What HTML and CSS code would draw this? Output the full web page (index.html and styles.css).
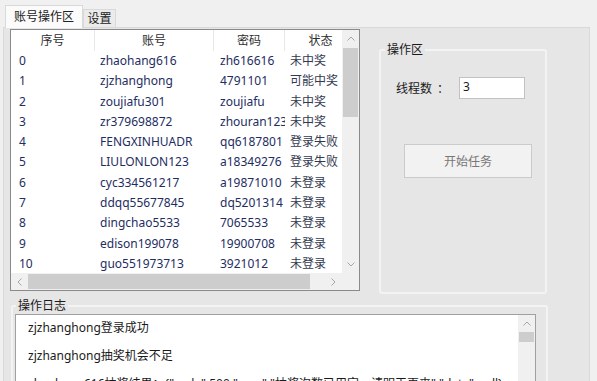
FILE: index.html
```html
<!DOCTYPE html>
<html lang="zh-CN">
<head>
<meta charset="utf-8">
<title>账号操作区</title>
<link rel="stylesheet" href="styles.css">
</head>
<body>
<div class="tabstrip">
  <div class="tab active">账号操作区</div>
  <div class="tab">设置</div>
</div>
<div class="tabpage">
  <div class="toprow">
    <div class="listview">
      <div class="lv-view">
        <div class="lv-header">
          <div class="hc c1">序号</div>
          <div class="hc c2">账号</div>
          <div class="hc c3">密码</div>
          <div class="hc c4">状态</div>
        </div>
        <div class="lv-row"><div class="cell c1">0</div><div class="cell c2">zhaohang616</div><div class="cell c3">zh616616</div><div class="cell c4">未中奖</div></div>
        <div class="lv-row"><div class="cell c1">1</div><div class="cell c2">zjzhanghong</div><div class="cell c3">4791101</div><div class="cell c4">可能中奖</div></div>
        <div class="lv-row"><div class="cell c1">2</div><div class="cell c2">zoujiafu301</div><div class="cell c3">zoujiafu</div><div class="cell c4">未中奖</div></div>
        <div class="lv-row"><div class="cell c1">3</div><div class="cell c2">zr379698872</div><div class="cell c3">zhouran123</div><div class="cell c4">未中奖</div></div>
        <div class="lv-row"><div class="cell c1">4</div><div class="cell c2">FENGXINHUADR</div><div class="cell c3">qq6187801</div><div class="cell c4">登录失败</div></div>
        <div class="lv-row"><div class="cell c1">5</div><div class="cell c2">LIULONLON123</div><div class="cell c3">a18349276</div><div class="cell c4">登录失败</div></div>
        <div class="lv-row"><div class="cell c1">6</div><div class="cell c2">cyc334561217</div><div class="cell c3">a19871010</div><div class="cell c4">未登录</div></div>
        <div class="lv-row"><div class="cell c1">7</div><div class="cell c2">ddqq55677845</div><div class="cell c3">dq5201314</div><div class="cell c4">未登录</div></div>
        <div class="lv-row"><div class="cell c1">8</div><div class="cell c2">dingchao5533</div><div class="cell c3">7065533</div><div class="cell c4">未登录</div></div>
        <div class="lv-row"><div class="cell c1">9</div><div class="cell c2">edison199078</div><div class="cell c3">19900708</div><div class="cell c4">未登录</div></div>
        <div class="lv-row"><div class="cell c1">10</div><div class="cell c2">guo551973713</div><div class="cell c3">3921012</div><div class="cell c4">未登录</div></div>
      </div>
      <div class="vscroll">
        <div class="sbtn"><svg width="8" height="5" viewBox="0 0 8 5"><polyline points="0.5,4.5 4,1 7.5,4.5" fill="none" stroke="#a6a6a6" stroke-width="1"/></svg></div>
        <div class="vtrack"><div class="vthumb"></div></div>
        <div class="sbtn"><svg width="8" height="5" viewBox="0 0 8 5"><polyline points="0.5,0.5 4,4 7.5,0.5" fill="none" stroke="#a6a6a6" stroke-width="1"/></svg></div>
      </div>
      <div class="hscroll">
        <div class="sbtn"><svg width="5" height="8" viewBox="0 0 5 8"><polyline points="4.5,0.5 1,4 4.5,7.5" fill="none" stroke="#a6a6a6" stroke-width="1"/></svg></div>
        <div class="htrack"><div class="hthumb"></div></div>
        <div class="sbtn"><svg width="5" height="8" viewBox="0 0 5 8"><polyline points="0.5,0.5 4,4 0.5,7.5" fill="none" stroke="#a6a6a6" stroke-width="1"/></svg></div>
      </div>
      <div class="corner"></div>
    </div>
    <fieldset class="group opgroup">
      <legend>操作区</legend>
      <div class="field">
        <span class="label">线程数<span class="colon">：</span></span>
        <div class="input">3</div>
      </div>
      <div class="btn">开始任务</div>
    </fieldset>
  </div>
  <fieldset class="group loggroup">
    <legend>操作日志</legend>
    <div class="logbox">
      <div class="logtext">
        <div class="line">zjzhanghong登录成功</div>
        <div class="line">zjzhanghong抽奖机会不足</div>
        <div class="line">zhaohang616抽奖结果：{"code":500,"msg":"抽奖次数已用完，请明天再来","data":null}</div>
      </div>
      <div class="logscroll">
        <div class="sbtn"><svg width="8" height="5" viewBox="0 0 8 5"><polyline points="0.5,4.5 4,1 7.5,4.5" fill="none" stroke="#a6a6a6" stroke-width="1"/></svg></div>
        <div class="logthumb"></div>
      </div>
    </div>
  </fieldset>
</div>
</body>
</html>
```

FILE: styles.css
```css
html, body {
  margin: 0;
  padding: 0;
}

body {
  width: 597px;
  height: 381px;
  overflow: hidden;
  background: #f0f0f0;
  font-family: "Noto Sans", "Noto Sans CJK SC", sans-serif;
  font-size: 12px;
  color: #1a1a1a;
}

/* ---------- tabs ---------- */
.tabstrip {
  display: flex;
  align-items: flex-end;
  height: 22px;
  padding: 5px 0 0 5px;
}

.tab {
  box-sizing: border-box;
  width: 33px;
  height: 18px;
  border: 1px solid #d9d9d9;
  border-bottom: none;
  background: #ebebeb;
  text-align: center;
  line-height: 17px;
  color: #222;
  white-space: nowrap;
}

.tab.active {
  position: relative;
  z-index: 1;
  width: 78px;
  height: 23px;
  margin-bottom: -1px;
  background: #fbfbfb;
  line-height: 22px;
}

.tabpage {
  box-sizing: border-box;
  width: 587px;
  height: 360px;
  margin-left: 3px;
  border: 1px solid #d9d9d9;
  background: #e6e6e6;
  padding: 1px 0 0 6px;
}

.toprow {
  display: flex;
  align-items: flex-start;
}

/* ---------- list view ---------- */
.listview {
  box-sizing: border-box;
  width: 350px;
  height: 262px;
  border: 1px solid #8a8a8a;
  background: #fff;
  display: grid;
  grid-template-columns: 331px 17px;
  grid-template-rows: 243px 17px;
}

.lv-view {
  overflow: hidden;
  white-space: nowrap;
}

.lv-header {
  display: flex;
  height: 21px;
  line-height: 21px;
  background: #fff;
}

.hc {
  flex: none;
  box-sizing: border-box;
  border-right: 1px solid #e8e8e8;
  text-align: center;
  color: #2e2e2e;
}

.lv-row {
  display: flex;
  height: 20.3px;
  line-height: 20.3px;
}

.cell {
  flex: none;
  box-sizing: border-box;
  overflow: hidden;
  padding-left: 5px;
  padding-right: 2px;
  color: #1e2d62;
}

.c1 { width: 84px; }
.c2 { width: 119px; }
.c3 { width: 71px; }
.c4 { width: 72px; }

.cell.c1 { padding-left: 8px; }
.cell.c3 { padding-left: 6px; }
.cell.c4 { color: #33394f; }

.vscroll {
  display: flex;
  flex-direction: column;
  background: #f0f0f0;
}

.sbtn {
  flex: none;
  width: 17px;
  height: 17px;
  display: flex;
  align-items: center;
  justify-content: center;
}

.vtrack {
  flex: 1;
  padding: 1px 1px 0;
}

.vthumb {
  height: 69px;
  background: #cdcdcd;
}

.hscroll {
  display: flex;
  background: #f0f0f0;
}

.htrack {
  flex: 1;
  padding: 1px 0;
}

.hthumb {
  width: 282px;
  height: 15px;
  background: #cdcdcd;
}

.corner {
  background: #f0f0f0;
}

/* ---------- group boxes ---------- */
.group {
  box-sizing: border-box;
  margin: 0;
  border: 2px solid #f3f3f3;
  border-radius: 3px;
  min-inline-size: 0;
}

.group legend {
  padding: 0 2px;
  font-size: 12px;
  line-height: 16px;
  color: #1a1a1a;
}

.opgroup {
  width: 168px;
  height: 252px;
  margin: 13px 0 0 19px;
  padding: 0 0 0 4px;
}

.field {
  display: flex;
  align-items: center;
  margin: 19px 0 0 11px;
}

.label {
  width: 48px;
  color: #1a1a1a;
  white-space: nowrap;
}

.colon {
  display: inline-block;
  padding-left: 5px;
}

.input {
  box-sizing: border-box;
  width: 66px;
  height: 22px;
  margin-left: 15px;
  border: 1px solid #c2c2c2;
  background: #fff;
  padding: 2px 0 0 3px;
  line-height: 14px;
  color: #1a1a1a;
}

.btn {
  box-sizing: border-box;
  width: 128px;
  height: 34px;
  margin: 45px 0 0 19px;
  border: 1px solid #cbcbcb;
  background: #f2f2f2;
  color: #777;
  display: flex;
  align-items: center;
  justify-content: center;
}

.loggroup {
  width: 537px;
  height: 120px;
  margin: 4px 0 0 1px;
  padding: 0 0 0 2px;
}

.loggroup legend {
  margin-left: 1px;
}

.logbox {
  box-sizing: border-box;
  width: 521px;
  height: 90px;
  border: 1px solid #a0a0a0;
  background: #fff;
  display: grid;
  grid-template-columns: 502px 17px;
}

.logtext {
  overflow: hidden;
  white-space: nowrap;
  padding-left: 12px;
  margin-top: -1px;
}

.line {
  height: 28px;
  line-height: 28px;
  color: #1a1a1a;
}

.logscroll {
  background: #f0f0f0;
}

.logthumb {
  height: 10px;
  margin: 0 1px;
  background: #cdcdcd;
}
```
